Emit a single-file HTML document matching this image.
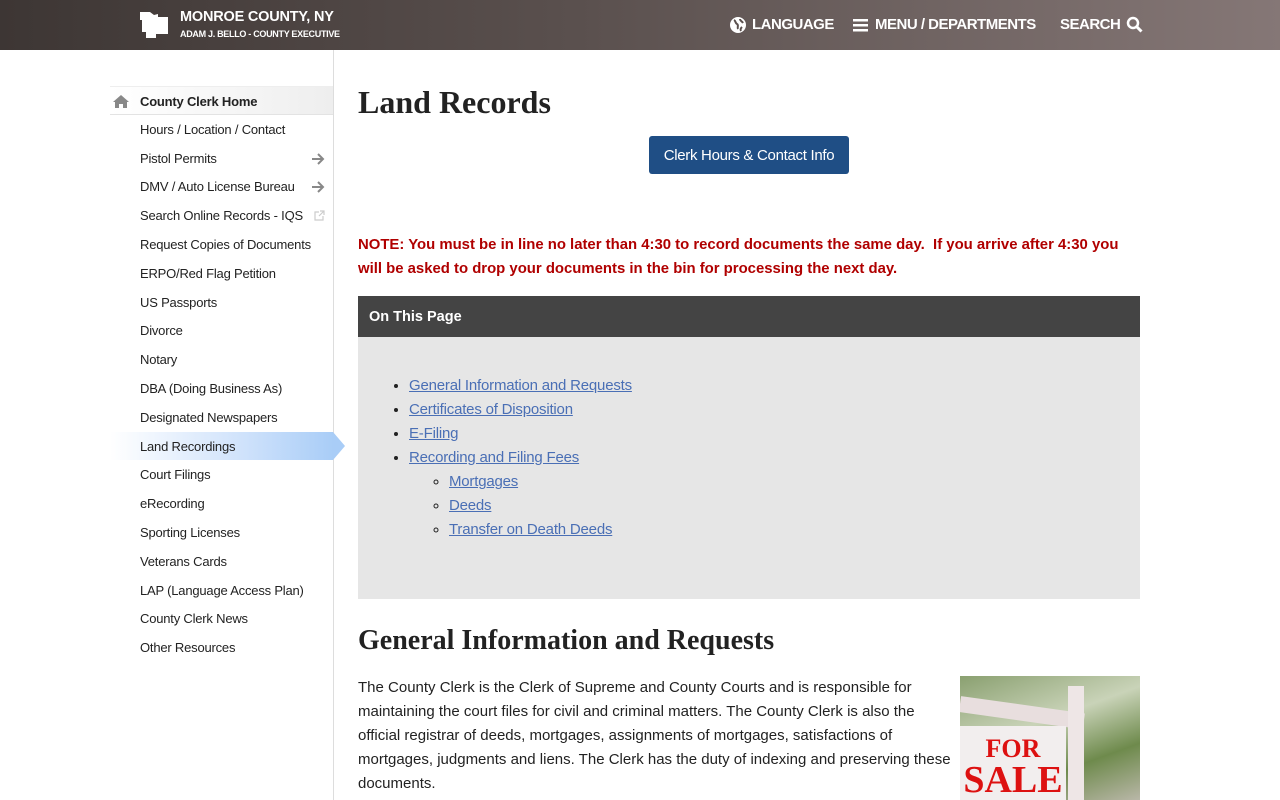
<!DOCTYPE html>
<html><head><meta charset="utf-8"><style>
*{margin:0;padding:0;box-sizing:border-box}
body{width:1280px;height:800px;overflow:hidden;background:#fff;font-family:"Liberation Sans",sans-serif;color:#222}
.hdr{height:50px;background:linear-gradient(90deg,#3d3634 0%,#5a504e 45%,#857776 100%);position:relative;color:#fff}
.logo{position:absolute;left:140px;top:12px;width:28px;height:26px}
.t1{position:absolute;left:180px;top:9px;font-weight:bold;font-size:14.5px;letter-spacing:-.2px}
.t2{position:absolute;left:180px;top:29px;font-weight:bold;font-size:9px;letter-spacing:-.3px}
.nav{position:absolute;top:16px;font-weight:bold;font-size:15px;letter-spacing:-.5px;display:flex;align-items:center;gap:6px}
.side{position:absolute;left:0;top:50px;width:334px;height:750px;border-right:1px solid #ddd}
.side ul{list-style:none;position:absolute;left:110px;top:36px;width:223px}
.side li{height:28.8px;line-height:29.5px;padding-left:30px;font-size:13px;color:#222;position:relative;letter-spacing:-.2px}
.side li.home{font-weight:bold;background:linear-gradient(90deg,#fff,#eee);border-top:1px solid #eee;border-bottom:1px solid #e3e3e3}
.side li.act{background:linear-gradient(90deg,#fff,#cfe2fb 60%,#a9cdf7);}
.side li.act:after{content:"";position:absolute;right:-12px;top:0;border-left:12px solid #a9cdf7;border-top:14.4px solid transparent;border-bottom:14.4px solid transparent}
.arr{position:absolute;right:8px;top:9px}
.main{position:absolute;left:358px;top:50px;width:782px}
h1{font-family:"Liberation Serif",serif;font-size:32px;font-weight:bold;margin-top:34px;color:#222}
.btn{position:absolute;left:291px;top:86px;width:200px;height:38px;background:#1f4e85;color:#fff;border-radius:3px;font-size:15px;text-align:center;line-height:40px;letter-spacing:-.3px}
.note{position:absolute;top:183px;color:#b00000;font-weight:bold;font-size:14.9px;line-height:24px;letter-spacing:0}
.otp{position:absolute;top:246px;width:782px}
.otph{height:41px;background:#444;color:#fff;font-weight:bold;font-size:14.5px;line-height:43px;padding-left:11px}
.otpb{height:262px;background:#e6e6e6;padding-top:37px}
.otpb ul{margin-left:51px;font-size:15px;line-height:24px;letter-spacing:-.2px}
.otpb ul ul{margin-left:40px;list-style:circle}
.otpb a{color:#4a6fb5;text-decoration:underline}
h2{position:absolute;top:575px;font-family:"Liberation Serif",serif;font-size:28px;font-weight:bold}
.p{position:absolute;top:626px;width:600px;font-size:15px;line-height:24px;color:#222;letter-spacing:0}
.img{position:absolute;left:602px;top:626px;width:180px;height:124px;background:linear-gradient(160deg,#8aa070,#c9d3b8 40%,#6e8a4c 70%,#b9b7a8);overflow:hidden}
</style></head><body>
<div class="hdr">
<svg class="logo" viewBox="0 0 28 26"><path d="M0 0h10l4 3 4-1v3h10v17h-12v4H6v-6H2V8H0z" fill="#fff"/></svg>
<div class="t1">MONROE COUNTY, NY</div>
<div class="t2">ADAM J. BELLO - COUNTY EXECUTIVE</div>
<div class="nav" style="left:730px"><svg width="16" height="16" viewBox="0 0 16 16"><circle cx="8" cy="8" r="8" fill="#fff"/><path d="M4 3c2 1 1 3 3 4s0 3 1 5M10 2c0 2 2 2 3 4M12 10c-1 1-2 2-1 4" stroke="#5a504e" stroke-width="2" fill="none"/></svg>LANGUAGE</div>
<div class="nav" style="left:853px"><svg width="16" height="14"><rect y="1" width="15" height="2.5" fill="#fff"/><rect y="6" width="15" height="2.5" fill="#fff"/><rect y="11" width="15" height="2.5" fill="#fff"/></svg>MENU / DEPARTMENTS</div>
<div class="nav" style="left:1060px">SEARCH<svg width="17" height="17"><circle cx="7" cy="7" r="5" stroke="#fff" stroke-width="2.5" fill="none"/><path d="M11 11l4.5 4.5" stroke="#fff" stroke-width="3"/></svg></div>
</div>
<div class="side"><ul>
<li class="home"><svg style="position:absolute;left:3px;top:8px" width="16" height="13" viewBox="0 0 16 13"><path d="M8 0L0 7h2v6h4V9h4v4h4V7h2z" fill="#888"/></svg>County Clerk Home</li>
<li>Hours / Location / Contact</li>
<li>Pistol Permits<svg class="arr" width="14" height="12" viewBox="0 0 14 12"><path d="M1 6h11M7 1l5 5-5 5" stroke="#888" stroke-width="2" fill="none"/></svg></li>
<li>DMV / Auto License Bureau<svg class="arr" width="14" height="12" viewBox="0 0 14 12"><path d="M1 6h11M7 1l5 5-5 5" stroke="#888" stroke-width="2" fill="none"/></svg></li>
<li>Search Online Records - IQS<svg class="arr" width="11" height="11" viewBox="0 0 11 11"><path d="M5 2H1v8h8V6M6 1h4v4M10 1L5 6" stroke="#ccc" stroke-width="1.2" fill="none"/></svg></li>
<li>Request Copies of Documents</li>
<li>ERPO/Red Flag Petition</li>
<li>US Passports</li>
<li>Divorce</li>
<li>Notary</li>
<li>DBA (Doing Business As)</li>
<li>Designated Newspapers</li>
<li class="act">Land Recordings</li>
<li>Court Filings</li>
<li>eRecording</li>
<li>Sporting Licenses</li>
<li>Veterans Cards</li>
<li>LAP (Language Access Plan)</li>
<li>County Clerk News</li>
<li>Other Resources</li>
</ul></div>
<div class="main">
<h1>Land Records</h1>
<div class="btn">Clerk Hours &amp; Contact Info</div>
<div class="note">NOTE: You must be in line no later than 4:30 to record documents the same day.&nbsp; If you arrive after 4:30 you<br>will be asked to drop your documents in the bin for processing the next day.</div>
<div class="otp"><div class="otph">On This Page</div><div class="otpb"><ul>
<li><a>General Information and Requests</a></li>
<li><a>Certificates of Disposition</a></li>
<li><a>E-Filing</a></li>
<li><a>Recording and Filing Fees</a><ul><li><a>Mortgages</a></li><li><a>Deeds</a></li><li><a>Transfer on Death Deeds</a></li></ul></li>
</ul></div></div>
<h2>General Information and Requests</h2>
<div class="p">The County Clerk is the Clerk of Supreme and County Courts and is responsible for<br>maintaining the court files for civil and criminal matters. The County Clerk is also the<br>official registrar of deeds, mortgages, assignments of mortgages, satisfactions of<br>mortgages, judgments and liens. The Clerk has the duty of indexing and preserving these<br>documents.</div>
<div class="img"><div style="position:absolute;left:0;top:20px;width:125px;height:16px;background:#e8dede;transform:rotate(8deg);transform-origin:left"></div><div style="position:absolute;left:108px;top:10px;width:16px;height:120px;background:#eee6e6"></div><div style="position:absolute;left:0;top:50px;width:106px;height:80px;background:#f2eeee;color:#d11;font-family:'Liberation Serif',serif;font-weight:bold;text-align:center"><div style="font-size:26px;margin-top:8px">FOR</div><div style="font-size:38px;line-height:32px">SALE</div></div></div>
</div>
</body></html>
